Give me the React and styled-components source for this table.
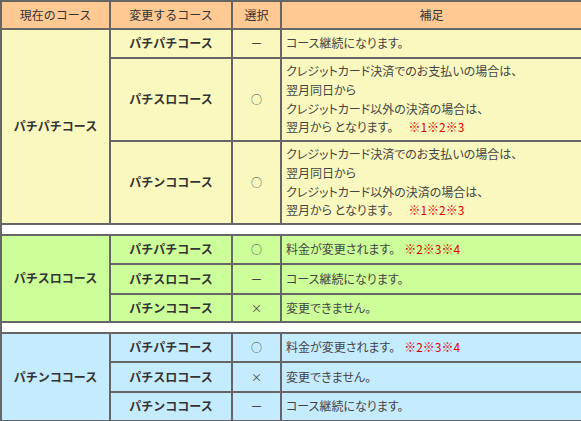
import React from 'react';
import styled, { createGlobalStyle } from 'styled-components';

const GlobalStyle = createGlobalStyle`
  html, body {
    margin: 0;
    padding: 0;
    background: #ffffff;
  }
  body {
    font-family: 'Noto Sans CJK JP', 'Noto Sans', sans-serif;
    color: #444;
  }
`;

const COLORS = {
  header: '#ffc994',
  yellow: '#f9f9bf',
  green: '#ccff99',
  blue: '#c5ebff',
};

const Table = styled.table`
  width: 581px;
  border-collapse: collapse;
  table-layout: fixed;
  font-size: 12px;
  line-height: 18.6px;
`;

const Row = styled.tr`
  height: ${(p) => p.$h}px;
`;

const HeadCell = styled.th`
  background: ${COLORS.header};
  border: 2px solid #666;
  color: #333;
  font-weight: 400;
  text-align: center;
  padding: 0 4px;
`;

const CourseCell = styled.td`
  background: ${(p) => p.$bg};
  border: 2px solid #666;
  color: #333;
  font-weight: 600;
  text-align: center;
  vertical-align: middle;
  padding: 0 4px;
`;

const MarkCell = styled.td`
  background: ${(p) => p.$bg};
  border: 2px solid #666;
  color: #444;
  text-align: center;
  font-size: 11px;
  padding: 0;
`;

const NoteCell = styled.td`
  background: ${(p) => p.$bg};
  border: 2px solid #666;
  color: #444;
  text-align: left;
  padding: 2px 4px;
  font-feature-settings: 'palt';
`;

const SpacerCell = styled.td`
  background: #fff;
  border: 2px solid #666;
  padding: 0;
`;

const Ref = styled.span`
  color: #dd0000;
  margin-left: ${(p) => p.$gap}px;
`;

const Continue = () => <>コース継続になります。</>;
const Denied = () => <>変更できません。</>;
const Fee = () => (
  <>
    料金が変更されます。<Ref $gap={9}>※2※3※4</Ref>
  </>
);
const Credit = () => (
  <>
    クレジットカード決済でのお支払いの場合は、
    <br />
    翌月同日から
    <br />
    クレジットカード以外の決済の場合は、
    <br />
    翌月から となります。<Ref $gap={15}>※1※2※3</Ref>
  </>
);

const groups = [
  {
    name: 'パチパチコース',
    bg: COLORS.yellow,
    rows: [
      { to: 'パチパチコース', mark: 'ー', note: <Continue />, h: 29 },
      { to: 'パチスロコース', mark: '○', note: <Credit />, h: 83 },
      { to: 'パチンココース', mark: '○', note: <Credit />, h: 83 },
    ],
  },
  {
    name: 'パチスロコース',
    bg: COLORS.green,
    rows: [
      { to: 'パチパチコース', mark: '○', note: <Fee />, h: 29 },
      { to: 'パチスロコース', mark: 'ー', note: <Continue />, h: 30 },
      { to: 'パチンココース', mark: '×', note: <Denied />, h: 28 },
    ],
  },
  {
    name: 'パチンココース',
    bg: COLORS.blue,
    rows: [
      { to: 'パチパチコース', mark: '○', note: <Fee />, h: 29 },
      { to: 'パチスロコース', mark: '×', note: <Denied />, h: 30 },
      { to: 'パチンココース', mark: 'ー', note: <Continue />, h: 29 },
    ],
  },
];

export default function App() {
  return (
    <>
      <GlobalStyle />
      <Table>
        <colgroup>
          <col style={{ width: 109 }} />
          <col style={{ width: 122 }} />
          <col style={{ width: 49 }} />
          <col style={{ width: 301 }} />
        </colgroup>
        <thead>
          <Row $h={28}>
            <HeadCell>現在のコース</HeadCell>
            <HeadCell>変更するコース</HeadCell>
            <HeadCell>選択</HeadCell>
            <HeadCell>補足</HeadCell>
          </Row>
        </thead>
        <tbody>
          {groups.map((g, gi) => (
            <React.Fragment key={g.name}>
              {gi > 0 && (
                <Row $h={11}>
                  <SpacerCell colSpan={4} />
                </Row>
              )}
              {g.rows.map((r, ri) => (
                <Row key={r.to} $h={r.h}>
                  {ri === 0 && (
                    <CourseCell $bg={g.bg} rowSpan={g.rows.length}>
                      {g.name}
                    </CourseCell>
                  )}
                  <CourseCell $bg={g.bg}>{r.to}</CourseCell>
                  <MarkCell $bg={g.bg}>{r.mark}</MarkCell>
                  <NoteCell $bg={g.bg}>{r.note}</NoteCell>
                </Row>
              ))}
            </React.Fragment>
          ))}
        </tbody>
      </Table>
    </>
  );
}
